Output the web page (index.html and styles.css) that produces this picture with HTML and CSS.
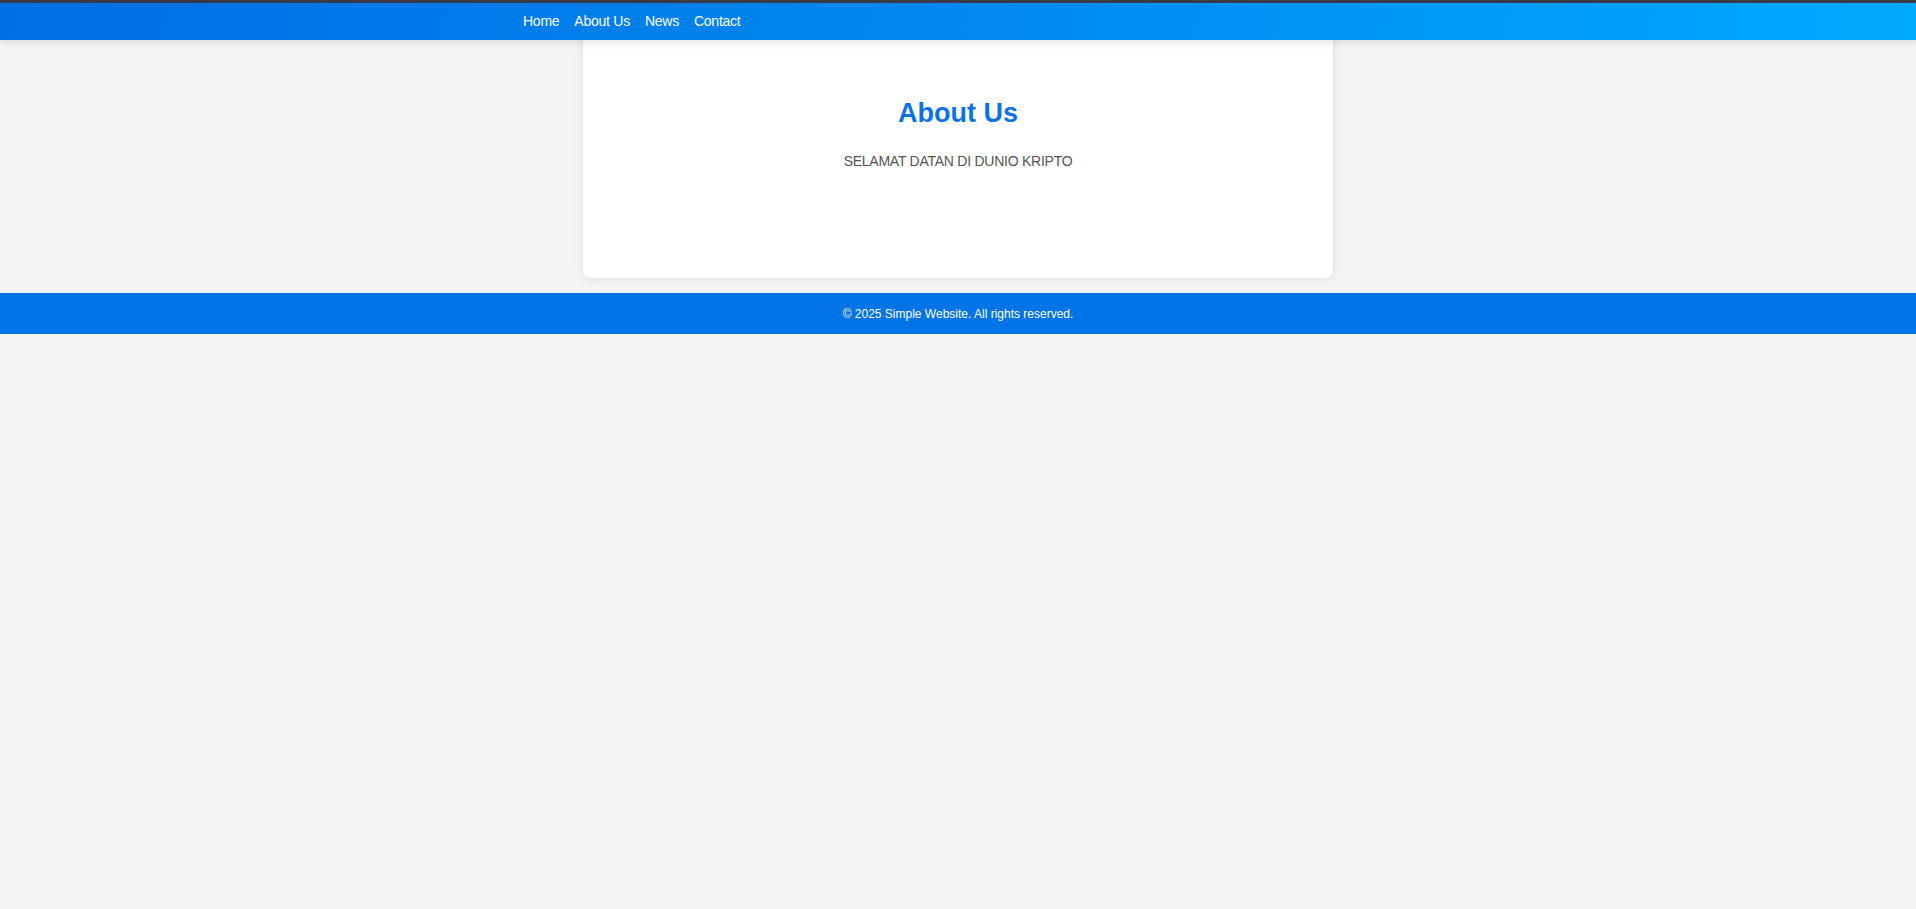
FILE: index.html
```html
<!DOCTYPE html>
<html lang="id">
<head>
<meta charset="utf-8">
<title>About Us</title>
<link rel="stylesheet" href="styles.css">
</head>
<body>
<header class="site-header">
  <nav class="nav">
    <ul class="nav-list">
      <li><a href="#">Home</a></li>
      <li><a href="#">About Us</a></li>
      <li><a href="#">News</a></li>
      <li><a href="#">Contact</a></li>
    </ul>
  </nav>
</header>
<main class="card">
  <h2 class="card-title">About Us</h2>
  <p class="card-text">SELAMAT DATAN DI DUNIO KRIPTO</p>
</main>
<footer class="site-footer">
  <p>&copy; 2025 Simple Website. All rights reserved.</p>
</footer>
</body>
</html>
```

FILE: styles.css
```css
html, body {
  margin: 0;
  padding: 0;
}
body {
  background: #f4f4f4;
  font-family: "Liberation Sans", Arial, sans-serif;
  color: #333;
}
.site-header {
  position: relative;
  z-index: 2;
  border-top: 3px solid #3b3a48;
  height: 37px;
  background: linear-gradient(100deg, #006fe2 0%, #0085ee 45%, #00aaff 100%);
  box-shadow: 0 2px 8px rgba(0, 0, 0, 0.12);
}
.nav {
  box-sizing: border-box;
  width: 870px;
  margin: 0 auto;
  height: 100%;
  padding-bottom: 2px;
}
.nav-list {
  list-style: none;
  margin: 0;
  padding: 0;
  height: 100%;
  display: flex;
  align-items: center;
  gap: 15px;
}
.nav-list a {
  color: #fff;
  text-decoration: none;
  font-size: 14px;
  letter-spacing: -0.25px;
}
.card {
  position: relative;
  z-index: 1;
  box-sizing: border-box;
  width: 750px;
  height: 238px;
  margin: 0 auto;
  padding-top: 58px;
  background: #fff;
  border-radius: 0 0 8px 8px;
  box-shadow: 0 0 10px rgba(0, 0, 0, 0.1);
  text-align: center;
}
.card-title {
  margin: 0 0 24px;
  font-size: 27px;
  font-weight: bold;
  color: #0a72e6;
}
.card-text {
  margin: 0;
  font-size: 14px;
  letter-spacing: -0.25px;
  color: #555;
}
.site-footer {
  margin-top: 15px;
  height: 41px;
  background: #0073e6;
  color: #fff;
  display: flex;
  align-items: center;
  justify-content: center;
}
.site-footer p {
  margin: 0;
  font-size: 12px;
}
```
